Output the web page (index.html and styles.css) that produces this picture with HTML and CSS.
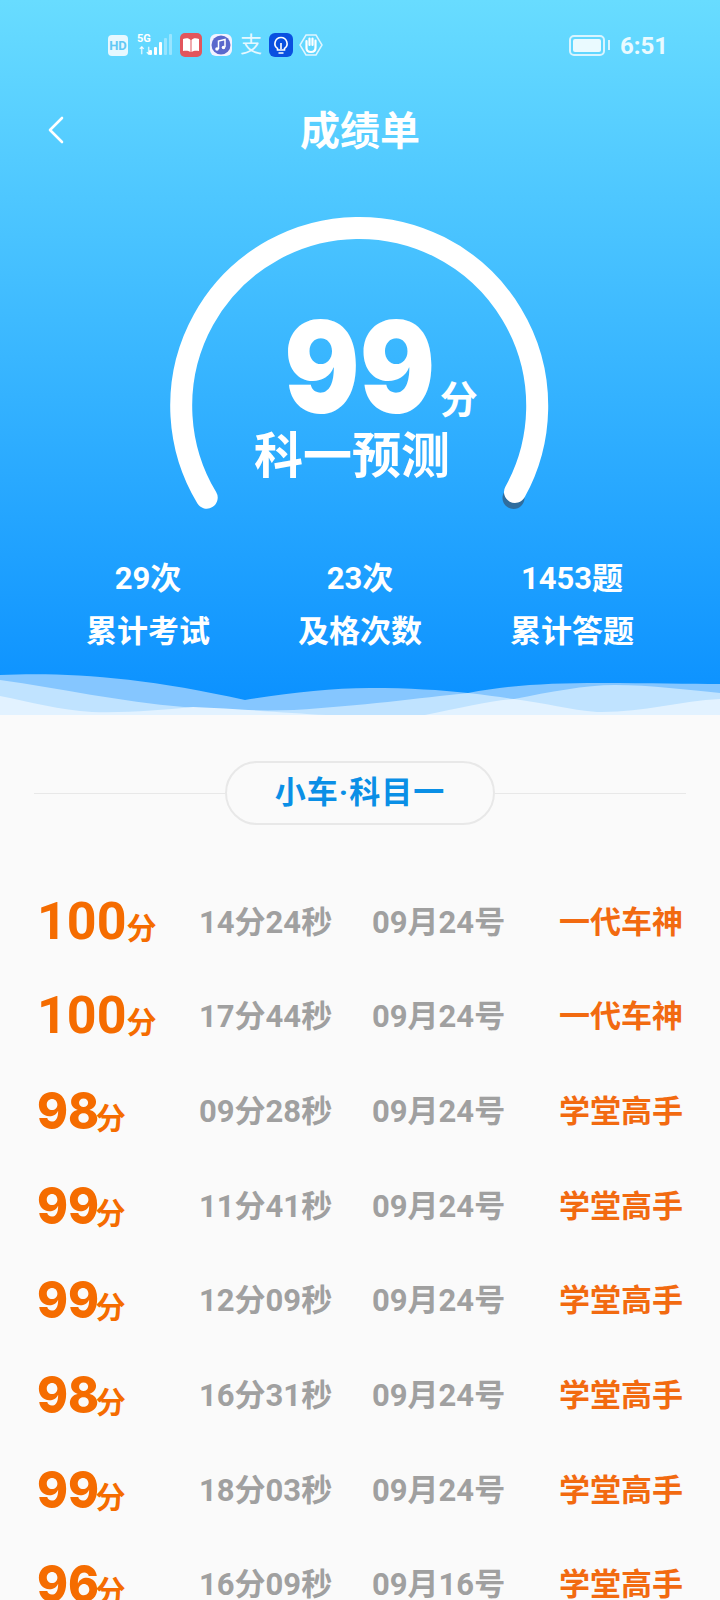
FILE: index.html
```html
<!DOCTYPE html>
<html lang="zh-CN">
<head>
    <meta charset="UTF-8">
    <meta name="viewport" content="width=device-width, initial-scale=1.0">
    <title>成绩单</title>
    <link rel="stylesheet" href="styles.css">
</head>
<body>
    <div class="page">
        <section class="hero">
            <div class="status-bar">
                <span class="hd-badge">HD</span>
                <div class="signal">
                    <div class="signal-text"><span class="net">5G</span><span class="arrows">↑↓</span></div>
                    <svg width="25" height="24" viewBox="0 0 25 24">
                        <rect x="0" y="17" width="3" height="5" rx="1" fill="#fff"/>
                        <rect x="5" y="14" width="3" height="8" rx="1" fill="#fff"/>
                        <rect x="10" y="9" width="3" height="13" rx="1" fill="#fff"/>
                        <rect x="15" y="5" width="3" height="17" rx="1" fill="#fff" opacity=".35"/>
                        <rect x="20" y="1" width="3" height="21" rx="1" fill="#fff" opacity=".35"/>
                    </svg>
                </div>
                <svg class="app-icon" width="22" height="24" viewBox="0 0 22 24">
                    <rect width="22" height="24" rx="5" fill="#e2555c"/>
                    <path d="M3 6c3-1 6-1 7.500 1v12c-2-1.500-5-1.500-7.500-1zM19 6c-3-1-6-1-7.500 1v12c2-1.500 5-1.500 7.500-1z" fill="#fff"/>
                </svg>
                <svg class="app-icon" width="22" height="22" viewBox="0 0 22 22">
                    <rect width="22" height="22" rx="6" fill="#f2f2ff"/>
                    <circle cx="11" cy="11" r="9.500" fill="#5a68cc"/>
                    <path d="M8.500 15V7l6.500-1.500V13" fill="none" stroke="#fff" stroke-width="1.500"/>
                    <circle cx="7" cy="15" r="1.800" fill="#fff"/>
                    <circle cx="13.500" cy="13.500" r="1.800" fill="#fff"/>
                </svg>
                <span class="ali">支</span>
                <svg class="app-icon" width="24" height="24" viewBox="0 0 24 24">
                    <rect width="24" height="24" rx="6" fill="#0a50e0"/>
                    <path d="M12 4.500a6 6 0 0 0-3.500 10.900V17h7v-1.600A6 6 0 0 0 12 4.500z" fill="none" stroke="#fff" stroke-width="1.600"/>
                    <path d="M9.500 20h5M12 10v6" stroke="#fff" stroke-width="1.600" fill="none"/>
                </svg>
                <svg class="app-icon hand" width="24" height="22" viewBox="0 0 24 22">
                    <path d="M7 1h10l6 10-6 10H7L1 11z" fill="none" stroke="#dff5ff" stroke-width="1.500"/>
                    <path d="M7.500 11V7M10.500 11V4.500M13.500 11V4.500M16.500 11V6.500M7.500 10v4c0 2.500 2 4 4.500 4s4.500-1.500 4.500-4.500V9" fill="none" stroke="#fff" stroke-width="2.200" stroke-linecap="round"/>
                </svg>
                <div class="status-right">
                    <div class="battery"><span class="battery-level"></span></div>
                    <span class="battery-cap"></span>
                    <span class="clock">6:51</span>
                </div>
            </div>

            <header class="nav">
                <svg class="back" width="18" height="28" viewBox="0 0 18 28">
                    <path d="M15 2 3 14l12 12" fill="none" stroke="#fff" stroke-width="2.600" stroke-linecap="round" stroke-linejoin="round"/>
                </svg>
                <h1 class="nav-title">成绩单</h1>
            </header>

            <div class="gauge">
                <svg class="gauge-arc" width="378" height="290" viewBox="0 0 378 290">
                    <circle cx="342.500" cy="279" r="11" fill="#2f6d9e"/>
                    <path d="M35.700 278.700A178 178 0 1 1 344 273" fill="none" stroke="#fff" stroke-width="22" stroke-linecap="round"/>
                </svg>
                <div class="gauge-score"><span class="gauge-num">99</span><span class="gauge-unit">分</span></div>
                <div class="gauge-label">科一预测</div>
            </div>

            <div class="stats">
                <div class="stat"><div>29次</div><div>累计考试</div></div>
                <div class="stat"><div>23次</div><div>及格次数</div></div>
                <div class="stat"><div>1453题</div><div>累计答题</div></div>
            </div>

            <svg class="wave" width="720" height="43" viewBox="0 672 720 43" preserveAspectRatio="none">
                <path d="M0 675C60 672 140 676 245 700C290 693 330 688 370 688C410 688 440 690 468 693C510 685 550 683 600 683C650 683 690 684 720 684V715H0Z" fill="#85c6ff"/>
                <path d="M0 680C60 688 120 702 184 707C220 710 260 711 294 710C360 706 420 698 468 693C485 695 500 697 514 699C550 692 585 685 615 685C650 685 690 690 720 693V715H0Z" fill="#c0e3ff"/>
                <path d="M0 696C30 702 60 710 92 712C130 713 160 710 193 707C240 709 290 713 326 715H425C460 708 490 701 514 699C545 703 570 710 597 712C640 713 680 701 720 699V715H0Z" fill="#e2f2ff"/>
            </svg>
        </section>

        <div class="subject">
            <span class="subject-line"></span>
            <div class="subject-pill">小车·科目一</div>
            <span class="subject-line"></span>
        </div>

        <div class="records">
            <div class="record"><div class="score"><span class="score-num">100</span><span class="score-unit">分</span></div><div class="muted">14分24秒</div><div class="muted">09月24号</div><div class="rank">一代车神</div></div>
            <div class="record"><div class="score"><span class="score-num">100</span><span class="score-unit">分</span></div><div class="muted">17分44秒</div><div class="muted">09月24号</div><div class="rank">一代车神</div></div>
            <div class="record"><div class="score"><span class="score-num score-slim">98</span><span class="score-unit">分</span></div><div class="muted">09分28秒</div><div class="muted">09月24号</div><div class="rank">学堂高手</div></div>
            <div class="record"><div class="score"><span class="score-num score-slim">99</span><span class="score-unit">分</span></div><div class="muted">11分41秒</div><div class="muted">09月24号</div><div class="rank">学堂高手</div></div>
            <div class="record"><div class="score"><span class="score-num score-slim">99</span><span class="score-unit">分</span></div><div class="muted">12分09秒</div><div class="muted">09月24号</div><div class="rank">学堂高手</div></div>
            <div class="record"><div class="score"><span class="score-num score-slim">98</span><span class="score-unit">分</span></div><div class="muted">16分31秒</div><div class="muted">09月24号</div><div class="rank">学堂高手</div></div>
            <div class="record"><div class="score"><span class="score-num score-slim">99</span><span class="score-unit">分</span></div><div class="muted">18分03秒</div><div class="muted">09月24号</div><div class="rank">学堂高手</div></div>
            <div class="record"><div class="score"><span class="score-num score-slim">96</span><span class="score-unit">分</span></div><div class="muted">16分09秒</div><div class="muted">09月16号</div><div class="rank">学堂高手</div></div>
        </div>
    </div>
</body>
</html>
```

FILE: styles.css
```css
* {
    box-sizing: border-box;
}
html, body {
    margin: 0;
    padding: 0;
    height: 1600px;
    overflow: hidden;
}
body {
    font-family: Roboto, "Noto Sans CJK SC", sans-serif;
    background-color: #fafafa;
}
.page {
    width: 720px;
    height: 1600px;
    overflow: hidden;
}
.hero {
    position: relative;
    height: 715px;
    padding-top: 33px;
    color: #fff;
    background: linear-gradient(180deg, #68dcff 0%, #0a90ff 100%);
}
.status-bar {
    display: flex;
    align-items: center;
    height: 24px;
    padding: 0 52px 0 108px;
}
.hd-badge {
    width: 20px;
    height: 21px;
    margin-right: 9px;
    border-radius: 4px;
    background-color: #e6f8ff;
    color: #62c8f5;
    font-size: 13px;
    font-weight: 700;
    line-height: 21px;
    text-align: center;
}
.signal {
    display: flex;
    align-items: center;
    width: 43px;
}
.signal-text {
    display: flex;
    flex-direction: column;
    width: 12px;
    color: #fff;
    font-size: 11px;
    font-weight: 700;
    line-height: 12px;
}
.arrows {
    font-size: 9px;
    letter-spacing: -2px;
}
.app-icon {
    flex: none;
    margin-left: 8px;
}
.signal + .app-icon {
    margin-left: 0;
}
.ali {
    width: 24px;
    margin-left: 8px;
    color: #e6f8ff;
    font-size: 22px;
    line-height: 24px;
}
.ali + .app-icon {
    margin-left: 5px;
}
.hand {
    margin-left: 6px;
}
.status-right {
    display: flex;
    align-items: center;
    margin-left: auto;
}
.battery {
    width: 36px;
    height: 21px;
    padding: 2px;
    border: 2px solid #d8f4ff;
    border-radius: 5px;
}
.battery-level {
    display: block;
    height: 100%;
    border-radius: 2px;
    background-color: #eafaff;
}
.battery-cap {
    width: 2px;
    height: 10px;
    margin-left: 3px;
    background-color: #d8f4ff;
}
.clock {
    margin-left: 10px;
    padding-top: 2px;
    color: #eafaff;
    font-size: 24px;
    font-weight: 700;
    line-height: 24px;
}
.nav {
    position: relative;
    height: 70px;
    margin-top: 40px;
}
.back {
    position: absolute;
    left: 47px;
    top: 19px;
}
.nav-title {
    margin: 0;
    font-size: 40px;
    font-weight: 700;
    line-height: 70px;
    text-align: center;
}
.gauge {
    position: relative;
    width: 378px;
    height: 290px;
    margin: 52px auto 0;
    padding-top: 84px;
    text-align: center;
}
.gauge-arc {
    position: absolute;
    left: 0;
    top: 0;
    overflow: visible;
}
.gauge-score {
    position: relative;
    height: 129px;
    line-height: 129px;
    white-space: nowrap;
}
.gauge-num {
    display: inline-block;
    font-family: Inter, Roboto, sans-serif;
    font-size: 127px;
    font-weight: 900;
    transform: scaleX(.88);
}
.gauge-unit {
    margin-right: -32px;
    margin-left: -6px;
    font-size: 38px;
    font-weight: 700;
}
.gauge-label {
    position: relative;
    padding-right: 16px;
    font-size: 49px;
    font-weight: 700;
    line-height: 50px;
}
.stats {
    display: grid;
    grid-template-columns: repeat(3, 212px);
    margin-top: 50px;
    padding: 0 42px;
}
.stat {
    display: flex;
    flex-direction: column;
    gap: 13px;
    font-size: 31px;
    font-weight: 700;
    line-height: 40px;
    text-align: center;
}
.wave {
    position: absolute;
    left: 0;
    bottom: 0;
    display: block;
}
.subject {
    display: flex;
    align-items: center;
    margin-top: 46px;
    padding: 0 34px;
}
.subject-line {
    flex: 1;
    height: 1px;
    background-color: #e8e8e8;
}
.subject-pill {
    width: 270px;
    height: 64px;
    border: 2px solid #e8e8e8;
    border-radius: 32px;
    color: #0a8fe6;
    font-size: 31px;
    font-weight: 700;
    letter-spacing: 1px;
    line-height: 60px;
    text-align: center;
}
.records {
    margin-top: 49px;
}
.record {
    display: grid;
    grid-template-columns: 162px 173px 187px 1fr;
    align-items: center;
    height: 94.67px;
    padding-left: 37px;
    font-size: 31px;
    font-weight: 700;
}
.score {
    color: #f56c00;
    white-space: nowrap;
}
.score-num {
    display: inline-block;
    font-size: 52px;
    font-weight: 700;
}
.score-slim {
    margin-right: -9px;
    font-family: Inter, Roboto, sans-serif;
    font-size: 51px;
    font-weight: 800;
    transform: scaleX(.92);
    transform-origin: left center;
}
.score-unit {
    font-size: 30px;
    font-weight: 700;
}
.muted {
    padding-bottom: 4px;
    color: #a0a0a0;
    white-space: nowrap;
}
.rank {
    padding-bottom: 4px;
    color: #f26a10;
    white-space: nowrap;
}
```
